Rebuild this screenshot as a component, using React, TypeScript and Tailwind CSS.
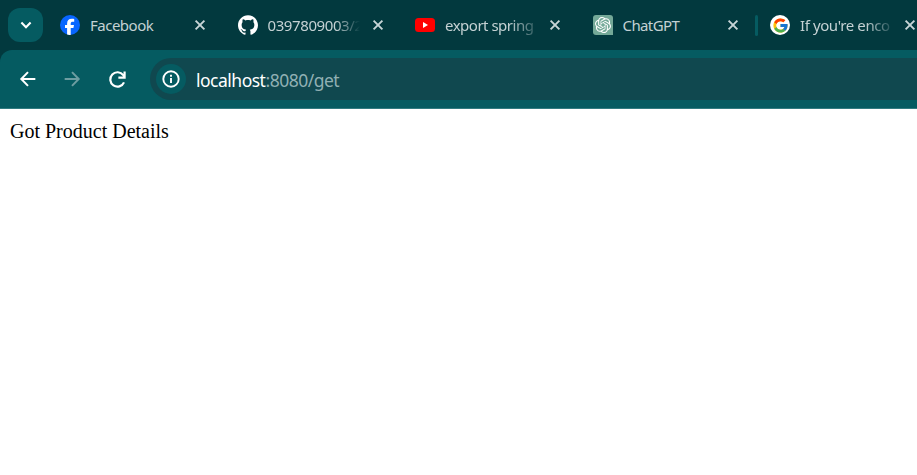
import type { ReactNode } from 'react';
import { SiGithub, SiOpenai } from 'react-icons/si';
import { FcGoogle } from 'react-icons/fc';

function Facebook() {
  return (
    <svg viewBox="0 0 20 20" className="block size-5">
      <circle cx="10" cy="10" r="10" fill="#0866ff" />
      <path d="M7.1 19.6v-6.5H5V10h2.1V8.7c0-3.4 1.5-5 4.9-5 .6 0 1.7.1 2.2.25v2.8c-.3 0-.7-.05-1.2-.05-1.7 0-2.3.6-2.3 2.3v1h3.3l-.6 3.1h-2.7v6.8c-1.1.15-2.5.1-3.6-.3z" fill="#fff" />
    </svg>
  );
}

function YouTube() {
  return (
    <svg viewBox="0 0 20 20" className="block size-5">
      <rect y="3" width="20" height="14" rx="3.5" fill="#f00" />
      <path d="M8 7v6l5-3z" fill="#fff" />
    </svg>
  );
}

function Close() {
  return (
    <svg viewBox="0 0 12 12" className="block size-3 shrink-0" fill="none" stroke="#c8d5d7" strokeWidth="1.9">
      <path d="M1.6 1.6l8.8 8.8M10.4 1.6l-8.8 8.8" />
    </svg>
  );
}

const tabs: { icon: ReactNode; title: string; look: string }[] = [
  { icon: <Facebook />, title: 'Facebook', look: 'tracking-[-0.5px]' },
  {
    icon: <SiGithub className="block size-5 text-white" />,
    title: '0397809003/2',
    look: 'tracking-[-0.4px] [mask-image:linear-gradient(to_right,black_68px,transparent_92px)]',
  },
  {
    icon: <YouTube />,
    title: 'export spring',
    look: 'tracking-[-0.5px] [mask-image:linear-gradient(to_right,black_64px,transparent_98px)]',
  },
  {
    icon: (
      <span className="flex size-5 items-center justify-center rounded-[3px] rounded-br-none bg-[#74a998]">
        <SiOpenai className="block size-4 text-white" />
      </span>
    ),
    title: 'ChatGPT',
    look: 'tracking-[-0.6px]',
  },
  {
    icon: (
      <span className="flex size-5 items-center justify-center rounded-full bg-white">
        <FcGoogle className="block size-[17px]" />
      </span>
    ),
    title: "If you're enco",
    look: 'tracking-[-0.4px] [mask-image:linear-gradient(to_right,black_66px,transparent_96px)]',
  },
];

export default function App() {
  return (
    <div className="flex h-[475px] w-[917px] flex-col overflow-hidden bg-white">
      <div className="flex h-[50px] shrink-0 items-center bg-[#02393e] pl-2 font-['Noto_Sans',sans-serif]">
        <div className="flex h-[34px] w-[35px] shrink-0 items-center justify-center rounded-xl bg-[#055b61]">
          <svg viewBox="0 0 12 8" className="block h-2 w-3" fill="none" stroke="#fff" strokeWidth="2.1">
            <path d="M1.4 1.6L6 6.2l4.6-4.6" />
          </svg>
        </div>
        <div className="ml-[17px] flex">
          {tabs.map((tab, i) => (
            <div key={tab.title} className="relative flex w-[177.5px] shrink-0 items-center">
              {i === 4 && <span className="absolute -left-[15px] h-[21px] w-[3px] rounded bg-[#055b61]" />}
              <span className="shrink-0">{tab.icon}</span>
              <span className={`ml-2.5 mr-[12px] w-[92px] shrink-0 whitespace-nowrap text-[15px] leading-5 text-[#c4d1d3] ${tab.look}`}>
                {tab.title}
              </span>
              <Close />
            </div>
          ))}
        </div>
      </div>
      <div className="shrink-0 bg-[#02393e]">
        <div className="flex h-[59px] items-start rounded-tl-xl border-b border-[#307b80] bg-[#055b61] pt-2">
          <div className="ml-[17px] flex h-[42px] w-[133px] shrink-0 items-center">
            <svg viewBox="0 0 24 24" className="block size-[22px]" fill="none" stroke="#fff" strokeWidth="2.2">
              <path d="M20 12H5M12 4.5L4.7 12l7.3 7.5" />
            </svg>
            <svg viewBox="0 0 24 24" className="ml-[22px] block size-[22px]" fill="none" stroke="#6d9da1" strokeWidth="2.2">
              <path d="M4 12h15M12 4.5l7.3 7.5-7.3 7.5" />
            </svg>
            <svg viewBox="0 0 24 24" className="ml-[23px] block size-[23px]" fill="none" stroke="#fff" strokeWidth="2.3">
              <path d="M18.8 15a7.5 7.5 0 1 1-.8-7.5l1.5 1.8M19.4 3.6v6.5h-6.5" />
            </svg>
          </div>
          <div className="flex h-[42px] flex-1 items-center rounded-l-full bg-[#10484f] pl-1.5 font-['Noto_Sans',sans-serif]">
            <span className="flex size-[30px] shrink-0 items-center justify-center rounded-full bg-[#055b61]">
              <svg viewBox="0 0 18 18" className="block size-[18px]" fill="none" stroke="#fff" strokeWidth="1.9">
                <circle cx="9" cy="9" r="7.7" />
                <path d="M9 8v5M9 4.8v2" />
              </svg>
            </span>
            <span className="ml-2.5 whitespace-nowrap pt-px text-[17.5px] leading-6 tracking-[-0.5px] text-[#91b0b3]">
              <span className="text-white">localhost</span>:8080/get
            </span>
          </div>
        </div>
      </div>
      <main className="px-2.5 pt-[11px] font-['Liberation_Serif',serif] text-[20px] leading-[23px] text-black">Got Product Details</main>
    </div>
  );
}
